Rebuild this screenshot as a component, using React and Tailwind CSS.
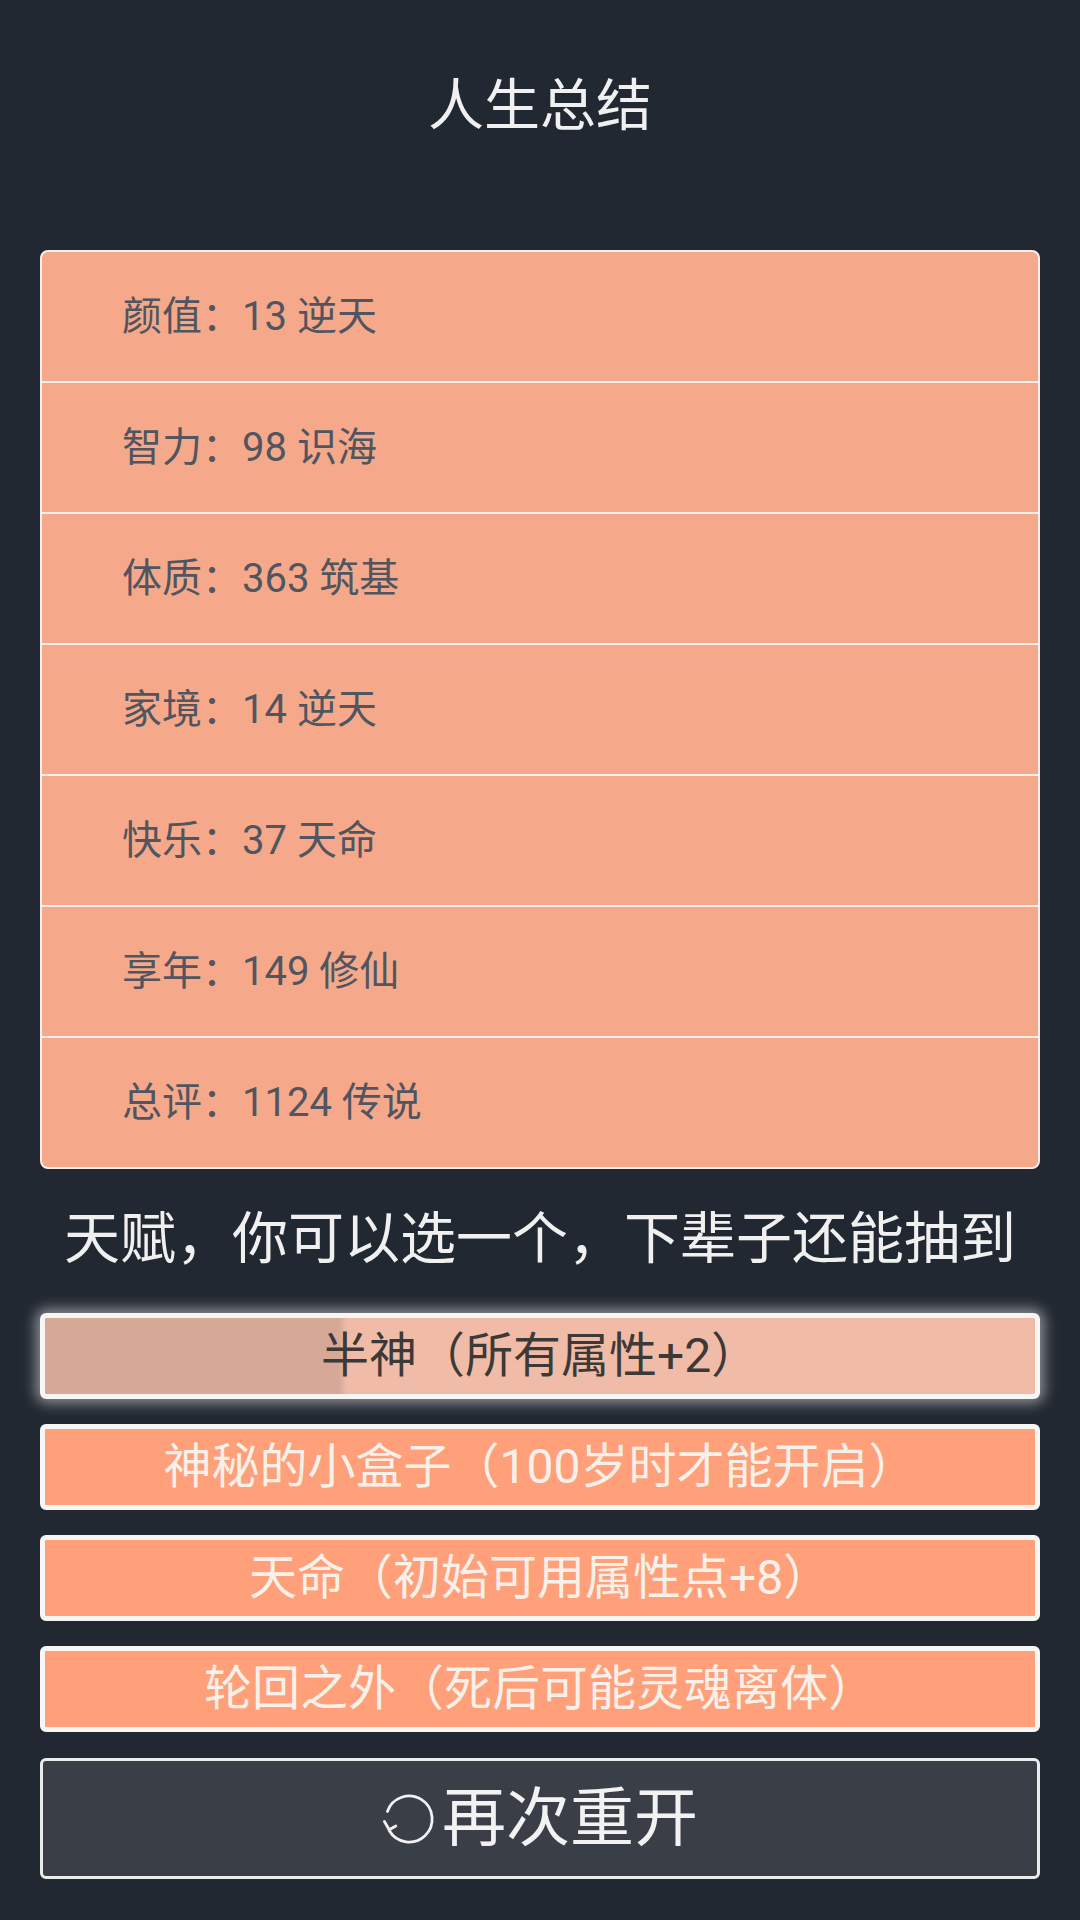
import React from "react";

const rows = [
  "颜值：13 逆天",
  "智力：98 识海",
  "体质：363 筑基",
  "家境：14 逆天",
  "快乐：37 天命",
  "享年：149 修仙",
  "总评：1124 传说",
];

const talents = [
  "神秘的小盒子（100岁时才能开启）",
  "天命（初始可用属性点+8）",
  "轮回之外（死后可能灵魂离体）",
];

function RestartIcon() {
  return (
    <svg
      width="54"
      height="54"
      viewBox="0 0 54 54"
      fill="none"
      stroke="currentColor"
      strokeWidth="2.8"
      strokeLinecap="round"
      strokeLinejoin="round"
    >
      <path d="M5.4 19.5 A23 23 0 1 1 7.2 38.5" />
      <path d="M2.4 29.5 L7.2 37.8 L13.8 34" />
    </svg>
  );
}

export default function App() {
  return (
    <div className="min-h-[1920px] w-full bg-[#222831] font-['Roboto','Noto_Sans_CJK_SC',sans-serif]">
      <div className="pt-[78px] text-center text-[56px] leading-none text-[#f0f0f0]">
        人生总结
      </div>

      <div className="mx-10 mt-[116px] grid gap-[2px] overflow-hidden rounded-lg border-2 border-[#f4efec] bg-[#f4efec]">
        {rows.map((r) => (
          <div
            key={r}
            className="flex h-[129px] items-center bg-[#f6a98a] pl-20 text-[40px] leading-none text-[#50555f]"
          >
            {r}
          </div>
        ))}
      </div>

      <div className="mt-[42px] text-center text-[56px] leading-none text-[#f0f0f0]">
        天赋，你可以选一个，下辈子还能抽到
      </div>

      <div className="mx-10 mt-[46px] flex flex-col gap-[25px]">
        <div className="flex h-[86px] items-center justify-center rounded-md border-[5px] border-[#f8f6f4] bg-[linear-gradient(to_right,#d5a898_0px,#d5a898_294px,#f0bca8_302px)] text-[48px] leading-none text-[#3d3936] shadow-[0_0_14px_4px_rgba(255,255,255,0.5)]">
          半神（所有属性+2）
        </div>
        {talents.map((t) => (
          <div
            key={t}
            className="flex h-[86px] items-center justify-center rounded-md border-[5px] border-[#f8f6f4] bg-[#ffa07a] text-[48px] leading-none text-[#f8f1ea]"
          >
            {t}
          </div>
        ))}
        <div className="mt-[1px] flex h-[121px] items-center justify-center gap-[6px] rounded-md border-[3px] border-[#ececec] bg-[#3a3e47] text-[64px] leading-none text-[#f2f2f2]">
          <RestartIcon />
          <span>再次重开</span>
        </div>
      </div>
    </div>
  );
}
